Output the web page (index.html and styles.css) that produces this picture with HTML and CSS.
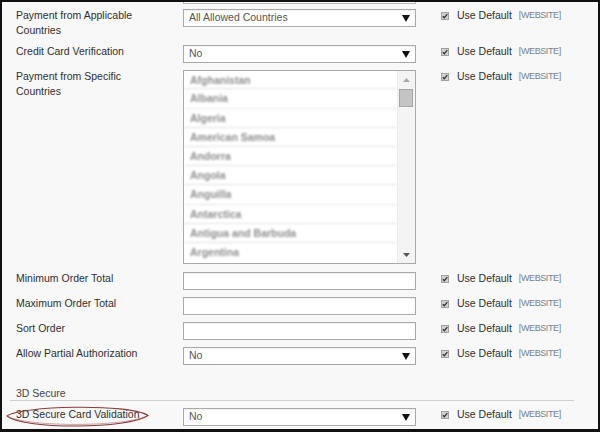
FILE: index.html
```html
<!DOCTYPE html>
<html>
<head>
<meta charset="utf-8">
<link rel="stylesheet" href="styles.css">
</head>
<body>
<div class="frame">
  <div class="row ghost-row"><div></div><div class="ghost"></div></div>

  <div class="row r-first">
    <div class="label">Payment from Applicable<br>Countries</div>
    <div class="select"><span class="val">All Allowed Countries</span><svg class="arrow" width="8" height="7" viewBox="0 0 8 7"><path d="M0 0H8L4 7Z" fill="#111"/></svg></div>
    <div class="scope"><svg class="cb" width="8" height="8" viewBox="0 0 8 8"><rect x="0.5" y="0.5" width="7" height="7" fill="#d2d2d2" stroke="#a0a0a0"/><path d="M1.8 4.2L3.3 5.7L6.3 2.2" fill="none" stroke="#333" stroke-width="1.3"/></svg><span class="ud">Use Default</span><span class="web">[WEBSITE]</span></div>
  </div>

  <div class="row">
    <div class="label">Credit Card Verification</div>
    <div class="select"><span class="val">No</span><svg class="arrow" width="8" height="7" viewBox="0 0 8 7"><path d="M0 0H8L4 7Z" fill="#111"/></svg></div>
    <div class="scope"><svg class="cb" width="8" height="8" viewBox="0 0 8 8"><rect x="0.5" y="0.5" width="7" height="7" fill="#d2d2d2" stroke="#a0a0a0"/><path d="M1.8 4.2L3.3 5.7L6.3 2.2" fill="none" stroke="#333" stroke-width="1.3"/></svg><span class="ud">Use Default</span><span class="web">[WEBSITE]</span></div>
  </div>

  <div class="row r-list">
    <div class="label">Payment from Specific<br>Countries</div>
    <div class="listbox">
      <div class="items">
        <div class="item">Afghanistan</div>
        <div class="item">Albania</div>
        <div class="item">Algeria</div>
        <div class="item">American Samoa</div>
        <div class="item">Andorra</div>
        <div class="item">Angola</div>
        <div class="item">Anguilla</div>
        <div class="item">Antarctica</div>
        <div class="item">Antigua and Barbuda</div>
        <div class="item">Argentina</div>
      </div>
      <div class="sbar">
        <div class="sb-btn"><svg width="7" height="4" viewBox="0 0 7 4"><path d="M0 4H7L3.5 0Z" fill="#a8a8a8"/></svg></div>
        <div class="thumb"></div>
        <div class="sb-fill"></div>
        <div class="sb-btn"><svg width="7" height="4" viewBox="0 0 7 4"><path d="M0 0H7L3.5 4Z" fill="#555"/></svg></div>
      </div>
    </div>
    <div class="scope"><svg class="cb" width="8" height="8" viewBox="0 0 8 8"><rect x="0.5" y="0.5" width="7" height="7" fill="#d2d2d2" stroke="#a0a0a0"/><path d="M1.8 4.2L3.3 5.7L6.3 2.2" fill="none" stroke="#333" stroke-width="1.3"/></svg><span class="ud">Use Default</span><span class="web">[WEBSITE]</span></div>
  </div>

  <div class="row">
    <div class="label">Minimum Order Total</div>
    <div class="input"></div>
    <div class="scope"><svg class="cb" width="8" height="8" viewBox="0 0 8 8"><rect x="0.5" y="0.5" width="7" height="7" fill="#d2d2d2" stroke="#a0a0a0"/><path d="M1.8 4.2L3.3 5.7L6.3 2.2" fill="none" stroke="#333" stroke-width="1.3"/></svg><span class="ud">Use Default</span><span class="web">[WEBSITE]</span></div>
  </div>

  <div class="row">
    <div class="label">Maximum Order Total</div>
    <div class="input"></div>
    <div class="scope"><svg class="cb" width="8" height="8" viewBox="0 0 8 8"><rect x="0.5" y="0.5" width="7" height="7" fill="#d2d2d2" stroke="#a0a0a0"/><path d="M1.8 4.2L3.3 5.7L6.3 2.2" fill="none" stroke="#333" stroke-width="1.3"/></svg><span class="ud">Use Default</span><span class="web">[WEBSITE]</span></div>
  </div>

  <div class="row">
    <div class="label">Sort Order</div>
    <div class="input"></div>
    <div class="scope"><svg class="cb" width="8" height="8" viewBox="0 0 8 8"><rect x="0.5" y="0.5" width="7" height="7" fill="#d2d2d2" stroke="#a0a0a0"/><path d="M1.8 4.2L3.3 5.7L6.3 2.2" fill="none" stroke="#333" stroke-width="1.3"/></svg><span class="ud">Use Default</span><span class="web">[WEBSITE]</span></div>
  </div>

  <div class="row">
    <div class="label">Allow Partial Authorization</div>
    <div class="select"><span class="val">No</span><svg class="arrow" width="8" height="7" viewBox="0 0 8 7"><path d="M0 0H8L4 7Z" fill="#111"/></svg></div>
    <div class="scope"><svg class="cb" width="8" height="8" viewBox="0 0 8 8"><rect x="0.5" y="0.5" width="7" height="7" fill="#d2d2d2" stroke="#a0a0a0"/><path d="M1.8 4.2L3.3 5.7L6.3 2.2" fill="none" stroke="#333" stroke-width="1.3"/></svg><span class="ud">Use Default</span><span class="web">[WEBSITE]</span></div>
  </div>

  <div class="section">3D Secure</div>

  <div class="row r-mark">
    <div class="label">3D Secure Card Validation<svg class="ellipse" width="146" height="26" viewBox="0 0 146 26"><path d="M2 13C14 3 124 0 143 12.5C124 26 20 27 2 13Z" fill="none" stroke="#8a3a3a" stroke-width="1.1"/><path d="M4 14C26 24 116 24 141 13.5" fill="none" stroke="#a86a6a" stroke-width="0.6"/></svg></div>
    <div class="select"><span class="val">No</span><svg class="arrow" width="8" height="7" viewBox="0 0 8 7"><path d="M0 0H8L4 7Z" fill="#111"/></svg></div>
    <div class="scope"><svg class="cb" width="8" height="8" viewBox="0 0 8 8"><rect x="0.5" y="0.5" width="7" height="7" fill="#d2d2d2" stroke="#a0a0a0"/><path d="M1.8 4.2L3.3 5.7L6.3 2.2" fill="none" stroke="#333" stroke-width="1.3"/></svg><span class="ud">Use Default</span><span class="web">[WEBSITE]</span></div>
  </div>
</div>
</body>
</html>
```

FILE: styles.css
```css
html, body {
  margin: 0;
  padding: 0;
  background: #111;
}

.frame {
  width: 600px;
  height: 432px;
  box-sizing: border-box;
  border: 2px solid #111;
  border-bottom-width: 3px;
  background: #f8f8f8;
  padding: 0 24px 0 8px;
  display: flex;
  flex-direction: column;
  font-family: "Liberation Sans", Arial, sans-serif;
  font-size: 10.5px;
  color: #333;
  overflow: hidden;
}

.row {
  display: grid;
  grid-template-columns: 173px 233px auto;
  align-items: start;
  margin-bottom: 7px;
}

.ghost-row {
  margin-bottom: 5px;
}

.ghost {
  height: 1px;
  border: 1px solid #b5b5b5;
  border-top: none;
  background: #fff;
}

.r-list {
  margin-bottom: 8px;
}

.label {
  position: relative;
  padding-left: 6px;
  line-height: 15px;
  margin-top: -1px;
  color: #2f2f2f;
}

.select,
.input {
  height: 16px;
  border: 1px solid #a9a9a9;
  background: #fff;
  box-shadow: inset 0 1px 1px rgba(0, 0, 0, 0.06);
}

.select {
  display: flex;
  align-items: flex-start;
  justify-content: space-between;
  padding: 0 5px 0 5px;
}

.val {
  line-height: 14px;
  color: #555;
}

.arrow {
  margin-top: 5px;
}

.listbox {
  height: 192px;
  border: 1px solid #a9a9a9;
  background: #fff;
  display: flex;
}

.items {
  flex: 1;
  display: flex;
  flex-direction: column;
}

.item {
  box-sizing: border-box;
  height: 19.2px;
  line-height: 18px;
  padding-left: 6px;
  border-bottom: 1px solid #e2e2e2;
  color: #8e8e8e;
  font-weight: bold;
  filter: blur(0.8px);
}

.item:first-child {
  height: 18.4px;
}

.item:last-child {
  border-bottom: none;
}

.sbar {
  width: 17px;
  background: #f4f4f4;
  border-left: 1px solid #ececec;
  display: flex;
  flex-direction: column;
}

.sb-btn {
  height: 17px;
  display: flex;
  align-items: center;
  justify-content: center;
}

.thumb {
  height: 16px;
  margin: 1px 2px 0 1px;
  background: #c4c4c4;
  border: 1px solid #a5a5a5;
}

.sb-fill {
  flex: 1;
}

.scope {
  display: flex;
  align-items: flex-start;
  margin-left: 25px;
  line-height: 15px;
  margin-top: -1px;
}

.cb {
  margin-top: 4px;
  margin-right: 8px;
}

.ud {
  color: #2f2f2f;
  margin-right: 7px;
}

.web {
  color: #738290;
  font-size: 9px;
  letter-spacing: -0.4px;
}

.section {
  margin-top: 15px;
  margin-bottom: 7px;
  padding-left: 6px;
  line-height: 13px;
  border-bottom: 1px solid #cfcfcf;
  color: #444;
  width: 558px;
}

.ellipse {
  position: absolute;
  left: -5px;
  top: -4px;
}
```
